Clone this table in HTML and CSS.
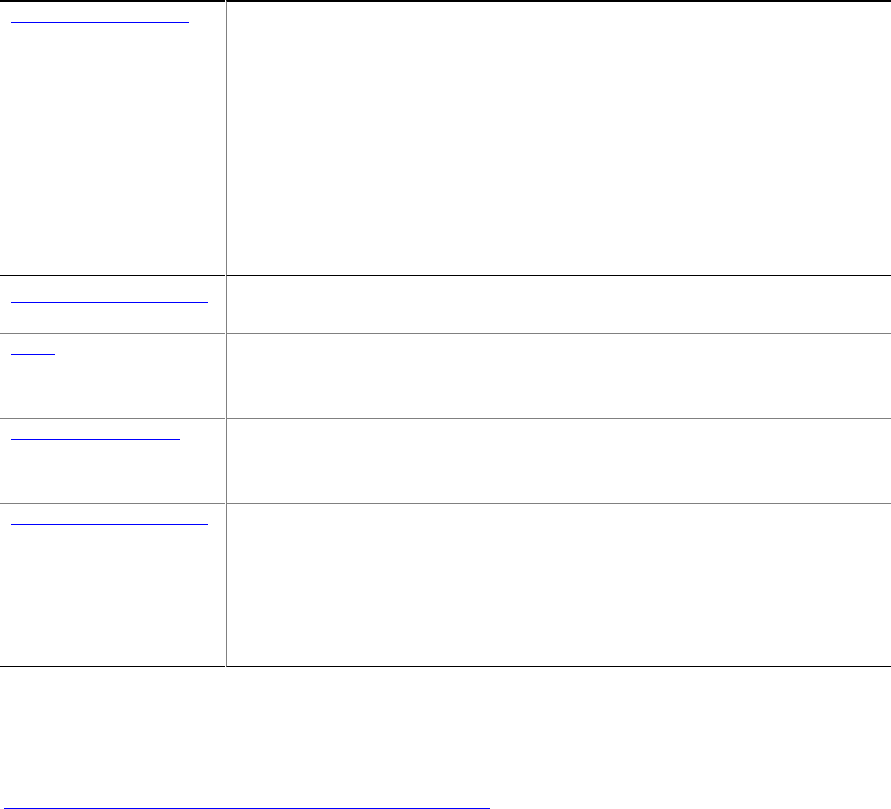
FILE: index.html
```html
<!DOCTYPE html>
<html lang="en">
<head>
<meta charset="utf-8">
<title>Index</title>
<link rel="stylesheet" href="styles.css">
</head>
<body>
<div class="table">
  <div class="cell left first"><a class="link w178" href="#a1" aria-label="Link 1"></a></div>
  <div class="cell right first"></div>

  <div class="cell left dark row2"><a class="link w197 mid" href="#a2" aria-label="Link 2"></a></div>
  <div class="cell right dark row2"></div>

  <div class="cell left row3"><a class="link w44" href="#a3" aria-label="Link 3"></a></div>
  <div class="cell right row3"></div>

  <div class="cell left row4"><a class="link w169" href="#a4" aria-label="Link 4"></a></div>
  <div class="cell right row4"></div>

  <div class="cell left last"><a class="link w197" href="#a5" aria-label="Link 5"></a></div>
  <div class="cell right last"></div>
</div>
<a class="link footer-link" href="#top" aria-label="Footer link"></a>
</body>
</html>
```

FILE: styles.css
```css
html, body {
  margin: 0;
  padding: 0;
  background: #ffffff;
  font-family: "Liberation Sans", Arial, sans-serif;
}

.table {
  display: grid;
  grid-template-columns: 225px 1fr;
  column-gap: 1px;
  width: 891px;
}

.cell {
  box-sizing: border-box;
  border-top: 1px solid #808080;
}

.cell.left {
  padding-left: 11px;
}

.cell.right {
  border-left: 1px solid #808080;
}

.cell.first {
  border-top: 2px solid #000000;
  height: 275px;
}

.cell.dark {
  border-top-color: #000000;
}

.row2 { height: 58px; }
.row3 { height: 85px; }
.row4 { height: 85px; }

.cell.last {
  height: 164px;
  border-bottom: 1px solid #000000;
}

.link {
  display: block;
  box-sizing: border-box;
  height: 21px;
  border-bottom: 1px solid #0000ff;
  text-decoration: none;
}

.link.mid { margin-top: 6px; }

.w178 { width: 178px; }
.w197 { width: 197px; }
.w44 { width: 44px; }
.w169 { width: 169px; }

.footer-link {
  width: 486px;
  margin-left: 4px;
  margin-top: 121px;
}
```
